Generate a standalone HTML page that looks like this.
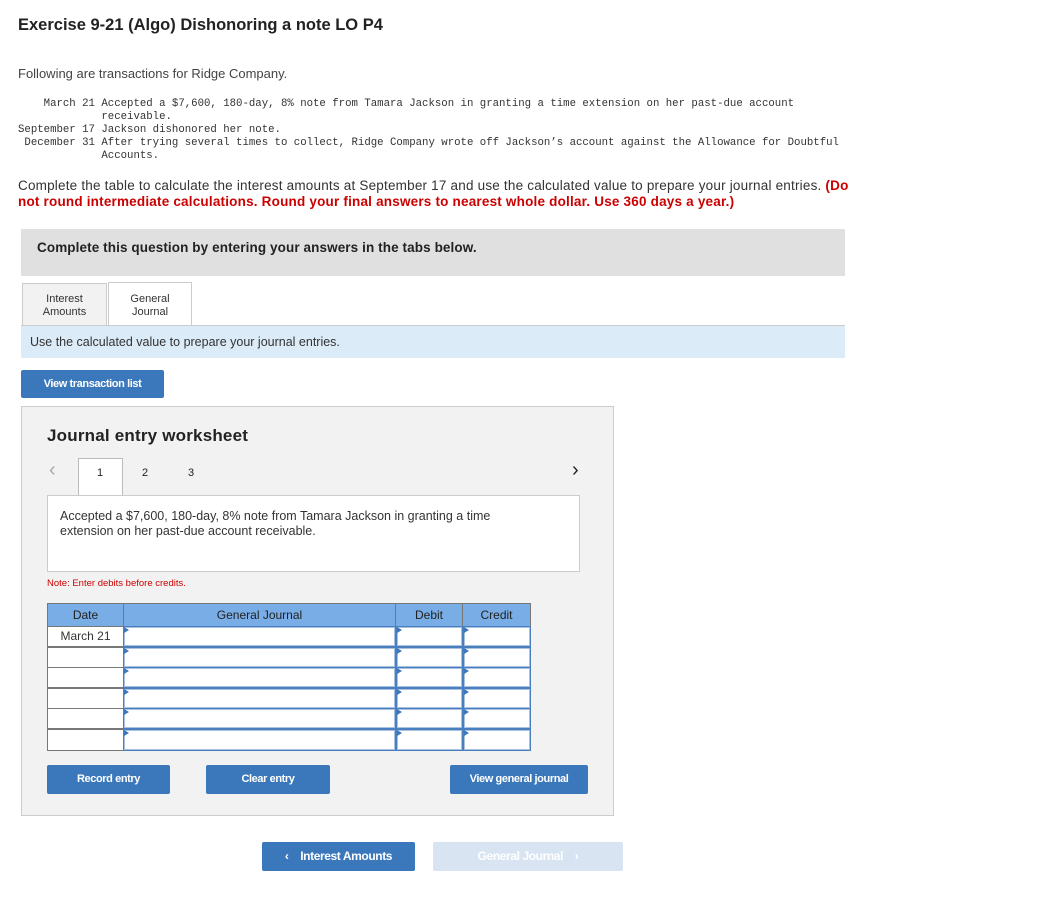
<!DOCTYPE html>
<html><head><meta charset="utf-8"><style>
*{box-sizing:border-box;margin:0;padding:0}
body{width:1040px;height:900px;background:#fff;position:relative;font-family:"Liberation Sans",sans-serif;color:#222;overflow:hidden}
.a{position:absolute;white-space:nowrap}
.mono{font-family:"Liberation Mono",monospace;font-size:10.7px;color:#333;line-height:13px;white-space:pre}
.btn{position:absolute;background:#3b78bb;color:#fff;font-weight:bold;font-size:11px;letter-spacing:-0.4px;text-align:center;border-radius:2px}
.cell{position:absolute;background:#fff;border:1px solid #a9c1e0}
.arr{position:absolute;width:0;height:0;border-top:3px solid transparent;border-bottom:3px solid transparent;border-left:5px solid #3b78bb}
</style></head><body>
<div class="a" style="left:18px;top:16px;font-size:16.5px;font-weight:bold;color:#222">Exercise 9-21 (Algo) Dishonoring a note LO P4</div>
<div class="a" style="left:18px;top:66px;font-size:13px;color:#444">Following are transactions for Ridge Company.</div>
<div class="a mono" style="left:18px;top:98px">    March 21 Accepted a $7,600, 180-day, 8% note from Tamara Jackson in granting a time extension on her past-due account
             receivable.
September 17 Jackson dishonored her note.
 December 31 After trying several times to collect, Ridge Company wrote off Jackson’s account against the Allowance for Doubtful
             Accounts.</div>
<div class="a" style="left:18px;top:178px;font-size:13.5px;line-height:16px;color:#333;letter-spacing:0.2px">Complete the table to calculate the interest amounts at September 17 and use the calculated value to prepare your journal entries. <b style="color:#c00">(Do</b><br><b style="color:#c00">not round intermediate calculations. Round your final answers to nearest whole dollar. Use 360 days a year.)</b></div>
<div class="a" style="left:21px;top:229px;width:824px;height:47px;background:#e0e0e0"></div>
<div class="a" style="left:37px;top:240px;font-size:13.5px;font-weight:bold;letter-spacing:0.1px;color:#222">Complete this question by entering your answers in the tabs below.</div>
<div class="a" style="left:22px;top:283px;width:85px;height:43px;background:#f2f2f2;border:1px solid #ccc;border-bottom:none;font-size:11px;text-align:center;line-height:13px;padding-top:9px;color:#333">Interest<br>Amounts</div>
<div class="a" style="left:108px;top:282px;width:84px;height:45px;background:#fff;border:1px solid #ccc;border-bottom:none;font-size:11px;text-align:center;line-height:13px;padding-top:10px;color:#333">General<br>Journal</div>
<div class="a" style="left:21px;top:325px;width:824px;height:1px;background:#ccc"></div>
<div class="a" style="left:21px;top:326px;width:824px;height:32px;background:#dcebf8"></div>
<div class="a" style="left:30px;top:335px;font-size:12.5px;color:#333">Use the calculated value to prepare your journal entries.</div>
<div class="btn" style="left:21px;top:370px;width:143px;height:28px;line-height:28px">View transaction list</div>
<div class="a" style="left:21px;top:406px;width:593px;height:410px;background:#f2f2f2;border:1px solid #ccc"></div>
<div class="a" style="left:47px;top:426px;font-size:17px;font-weight:bold;color:#222;letter-spacing:0.2px">Journal entry worksheet</div>
<div class="a" style="left:49px;top:459px;font-size:20px;color:#aaa">‹</div>
<div class="a" style="left:572px;top:459px;font-size:20px;color:#222">›</div>
<div class="a" style="left:78px;top:458px;width:45px;height:39px;background:#fff;border:1px solid #bbb;border-bottom:none"></div>
<div class="a" style="left:97px;top:467px;font-size:11px">1</div>
<div class="a" style="left:142px;top:467px;font-size:11px">2</div>
<div class="a" style="left:188px;top:467px;font-size:11px">3</div>
<div class="a" style="left:47px;top:495px;width:533px;height:77px;background:#fff;border:1px solid #ccc;white-space:normal;font-size:12.5px;line-height:15px;padding:13px 50px 13px 12px;color:#333">Accepted a $7,600, 180-day, 8% note from Tamara Jackson in granting a time extension on her past-due account receivable.</div>
<div class="a" style="left:47px;top:578px;font-size:9.5px;color:#c00">Note: Enter debits before credits.</div>
<div class="a" style="left:47px;top:603px;width:484px;height:148px;background:#777"></div>
<div class="a" style="left:48px;top:604px;width:75px;height:22px;background:#79ade6;font-size:12px;text-align:center;line-height:22px">Date</div>
<div class="a" style="left:124px;top:604px;width:271px;height:22px;background:#79ade6;font-size:12px;text-align:center;line-height:22px">General Journal</div>
<div class="a" style="left:396px;top:604px;width:66px;height:22px;background:#79ade6;font-size:12px;text-align:center;line-height:22px">Debit</div>
<div class="a" style="left:463px;top:604px;width:67px;height:22px;background:#79ade6;font-size:12px;text-align:center;line-height:22px">Credit</div>
<div class="a" style="left:48px;top:627px;width:75px;height:19px;background:#fff;font-size:12px;text-align:center;line-height:19px;color:#333">March 21</div>
<div class="a" style="left:48px;top:648px;width:75px;height:19px;background:#fff"></div>
<div class="a" style="left:48px;top:668px;width:75px;height:19px;background:#fff"></div>
<div class="a" style="left:48px;top:689px;width:75px;height:19px;background:#fff"></div>
<div class="a" style="left:48px;top:709px;width:75px;height:19px;background:#fff"></div>
<div class="a" style="left:48px;top:730px;width:75px;height:20px;background:#fff"></div>
<div class="a" style="left:123px;top:626px;width:408px;height:125px;background:#4a7fbf"></div>
<div class="cell" style="left:124px;top:627px;width:271px;height:19px"></div><div class="cell" style="left:397px;top:627px;width:65px;height:19px"></div><div class="cell" style="left:464px;top:627px;width:66px;height:19px"></div>
<div class="cell" style="left:124px;top:648px;width:271px;height:19px"></div><div class="cell" style="left:397px;top:648px;width:65px;height:19px"></div><div class="cell" style="left:464px;top:648px;width:66px;height:19px"></div>
<div class="cell" style="left:124px;top:668px;width:271px;height:19px"></div><div class="cell" style="left:397px;top:668px;width:65px;height:19px"></div><div class="cell" style="left:464px;top:668px;width:66px;height:19px"></div>
<div class="cell" style="left:124px;top:689px;width:271px;height:19px"></div><div class="cell" style="left:397px;top:689px;width:65px;height:19px"></div><div class="cell" style="left:464px;top:689px;width:66px;height:19px"></div>
<div class="cell" style="left:124px;top:709px;width:271px;height:19px"></div><div class="cell" style="left:397px;top:709px;width:65px;height:19px"></div><div class="cell" style="left:464px;top:709px;width:66px;height:19px"></div>
<div class="cell" style="left:124px;top:730px;width:271px;height:20px"></div><div class="cell" style="left:397px;top:730px;width:65px;height:20px"></div><div class="cell" style="left:464px;top:730px;width:66px;height:20px"></div>
<div class="arr" style="left:124px;top:627px"></div><div class="arr" style="left:397px;top:627px"></div><div class="arr" style="left:464px;top:627px"></div>
<div class="arr" style="left:124px;top:648px"></div><div class="arr" style="left:397px;top:648px"></div><div class="arr" style="left:464px;top:648px"></div>
<div class="arr" style="left:124px;top:668px"></div><div class="arr" style="left:397px;top:668px"></div><div class="arr" style="left:464px;top:668px"></div>
<div class="arr" style="left:124px;top:689px"></div><div class="arr" style="left:397px;top:689px"></div><div class="arr" style="left:464px;top:689px"></div>
<div class="arr" style="left:124px;top:709px"></div><div class="arr" style="left:397px;top:709px"></div><div class="arr" style="left:464px;top:709px"></div>
<div class="arr" style="left:124px;top:730px"></div><div class="arr" style="left:397px;top:730px"></div><div class="arr" style="left:464px;top:730px"></div>
<div class="btn" style="left:47px;top:765px;width:123px;height:29px;line-height:29px">Record entry</div>
<div class="btn" style="left:206px;top:765px;width:124px;height:29px;line-height:29px">Clear entry</div>
<div class="btn" style="left:450px;top:765px;width:138px;height:29px;line-height:29px">View general journal</div>
<div class="btn" style="left:262px;top:842px;width:153px;height:29px;line-height:29px;font-size:12px">‹&nbsp;&nbsp;&nbsp;&nbsp;Interest Amounts</div>
<div class="btn" style="left:433px;top:842px;width:190px;height:29px;line-height:29px;font-size:12px;background:#d8e4f2;color:#fff">General Journal&nbsp;&nbsp;&nbsp;&nbsp;›</div>
</body></html>
